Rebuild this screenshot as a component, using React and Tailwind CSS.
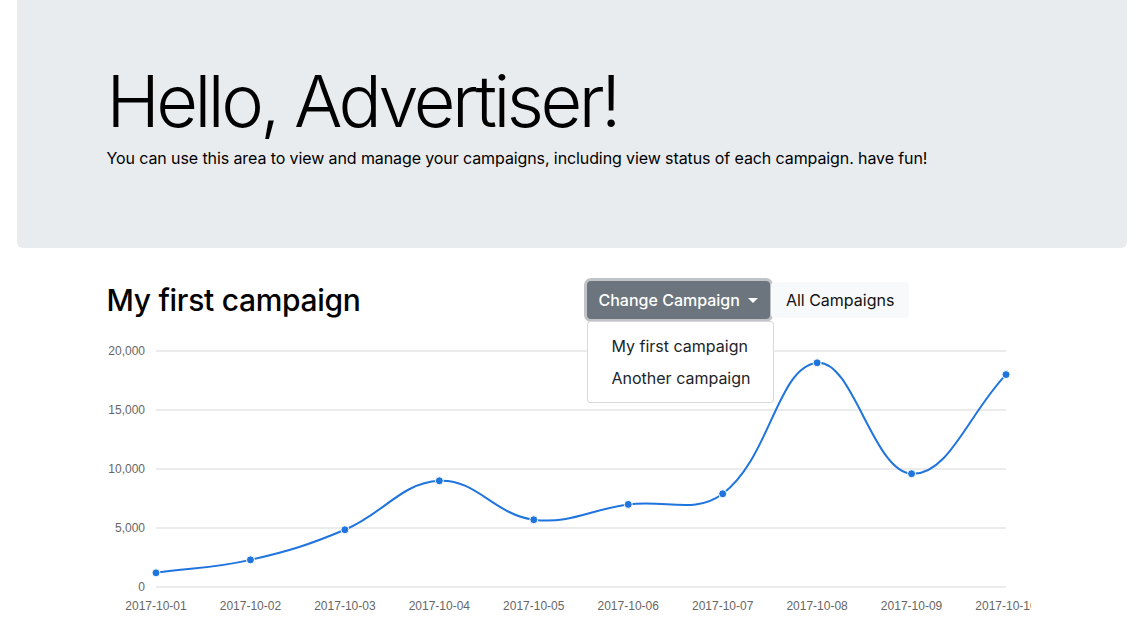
import React from 'react'

const labels = [
  '2017-10-01',
  '2017-10-02',
  '2017-10-03',
  '2017-10-04',
  '2017-10-05',
  '2017-10-06',
  '2017-10-07',
  '2017-10-08',
  '2017-10-09',
  '2017-10-10',
]
const values = [1200, 2300, 4850, 9000, 5700, 7000, 7900, 19000, 9600, 18000]

// chart geometry (svg coords)
const left = 49
const right = 899
const top = 10
const bottom = 246
const xAt = (i) => left + ((right - left) / (values.length - 1)) * i
const yAt = (v) => bottom - ((bottom - top) * v) / 20000

// bezier control points, same idea as chart.js spline (tension 0.4)
function buildPath(pts, t = 0.4) {
  const cps = pts.map((p, i) => {
    const prev = pts[i - 1] || p
    const next = pts[i + 1] || p
    const d01 = Math.hypot(p.x - prev.x, p.y - prev.y)
    const d12 = Math.hypot(next.x - p.x, next.y - p.y)
    const s01 = d01 / (d01 + d12 || 1)
    const s12 = d12 / (d01 + d12 || 1)
    const fa = t * s01
    const fb = t * s12
    return {
      prev: { x: p.x - fa * (next.x - prev.x), y: p.y - fa * (next.y - prev.y) },
      next: { x: p.x + fb * (next.x - prev.x), y: p.y + fb * (next.y - prev.y) },
    }
  })
  let d = `M${pts[0].x},${pts[0].y}`
  for (let i = 1; i < pts.length; i++) {
    const a = cps[i - 1].next
    const b = cps[i].prev
    d += ` C${a.x},${a.y} ${b.x},${b.y} ${pts[i].x},${pts[i].y}`
  }
  return d
}

function Chart() {
  const pts = values.map((v, i) => ({ x: xAt(i), y: yAt(v) }))
  const ticks = [20000, 15000, 10000, 5000, 0]
  return (
    <div className="w-[924px] overflow-hidden">
      <svg width="930" height="280" className="block">
        {ticks.map((t) => (
          <g key={t}>
            <line x1={left} x2={right} y1={yAt(t)} y2={yAt(t)} stroke="#e5e5e5" strokeWidth="1.5" />
            <text
              x="38"
              y={yAt(t) + 4}
              textAnchor="end"
              fontSize="12"
              fill="#666"
              fontFamily="'Liberation Sans', Arial, sans-serif"
            >
              {t.toLocaleString('en-US')}
            </text>
          </g>
        ))}
        {labels.map((l, i) => (
          <text
            key={l}
            x={xAt(i)}
            y="269"
            textAnchor="middle"
            fontSize="12"
            fill="#666"
            fontFamily="'Liberation Sans', Arial, sans-serif"
          >
            {l}
          </text>
        ))}
        <path d={buildPath(pts)} fill="none" stroke="#1f74de" strokeWidth="2" />
        {pts.map((p, i) => (
          <circle key={i} cx={p.x} cy={p.y} r="4" fill="#1f74de" stroke="#fff" strokeWidth="1" />
        ))}
      </svg>
    </div>
  )
}

function App() {
  return (
    <div className="min-h-screen bg-white text-[#212529] font-['Inter','Helvetica_Neue',Arial,sans-serif]">
      {/* Jumbotron */}
      <div className="mx-auto max-w-[1140px] px-[15px]">
        <div className="h-[248px] rounded-b-md bg-[#e9ecef] pl-[90px] pt-[58px]">
          <h1 className="text-[72px] font-light leading-[1.2] tracking-[-3.5px] text-black">
            Hello, Advertiser!
          </h1>
          <p className="mt-[2px] text-[16px] leading-6 tracking-[-0.1px] text-black">
            You can use this area to view and manage your campaigns, including view status of each
            campaign. have fun!
          </p>
        </div>
      </div>

      {/* Campaign section */}
      <div className="mx-auto w-[960px] px-[15px] pt-[33px]">
        <div className="flex">
          <div className="w-1/2 pr-[15px]">
            <h2 className="text-[30px] font-medium leading-[38px] tracking-[-0.3px] text-black">
              My first campaign
            </h2>
          </div>
          <div className="w-1/2 pl-[15px]">
            <div className="relative flex">
              <button className="flex h-[38px] items-center whitespace-nowrap rounded bg-[#6c757d] px-3 text-[16px] font-medium text-white ring-[3px] ring-[#828a91]/50">
                Change Campaign
                <span className="ml-[8px] mt-[1px] h-0 w-0 border-x-[5px] border-t-[5px] border-x-transparent border-t-white" />
              </button>
              <button className="ml-[1px] mt-[1px] h-[36px] whitespace-nowrap rounded bg-[#f8f9fa] px-[15px] text-[16px] text-[#111]">
                All Campaigns
              </button>
              {/* Open dropdown */}
              <div className="absolute left-0 top-[40px] z-10 w-[187px] whitespace-nowrap rounded border border-black/15 bg-white py-2">
                <div className="px-6 py-1 text-[16px] leading-6 text-[#212529]">My first campaign</div>
                <div className="px-6 py-1 text-[16px] leading-6 text-[#212529]">Another campaign</div>
              </div>
            </div>
          </div>
        </div>
        <div className="mt-[22px]">
          <Chart />
        </div>
      </div>
    </div>
  )
}

export default App
